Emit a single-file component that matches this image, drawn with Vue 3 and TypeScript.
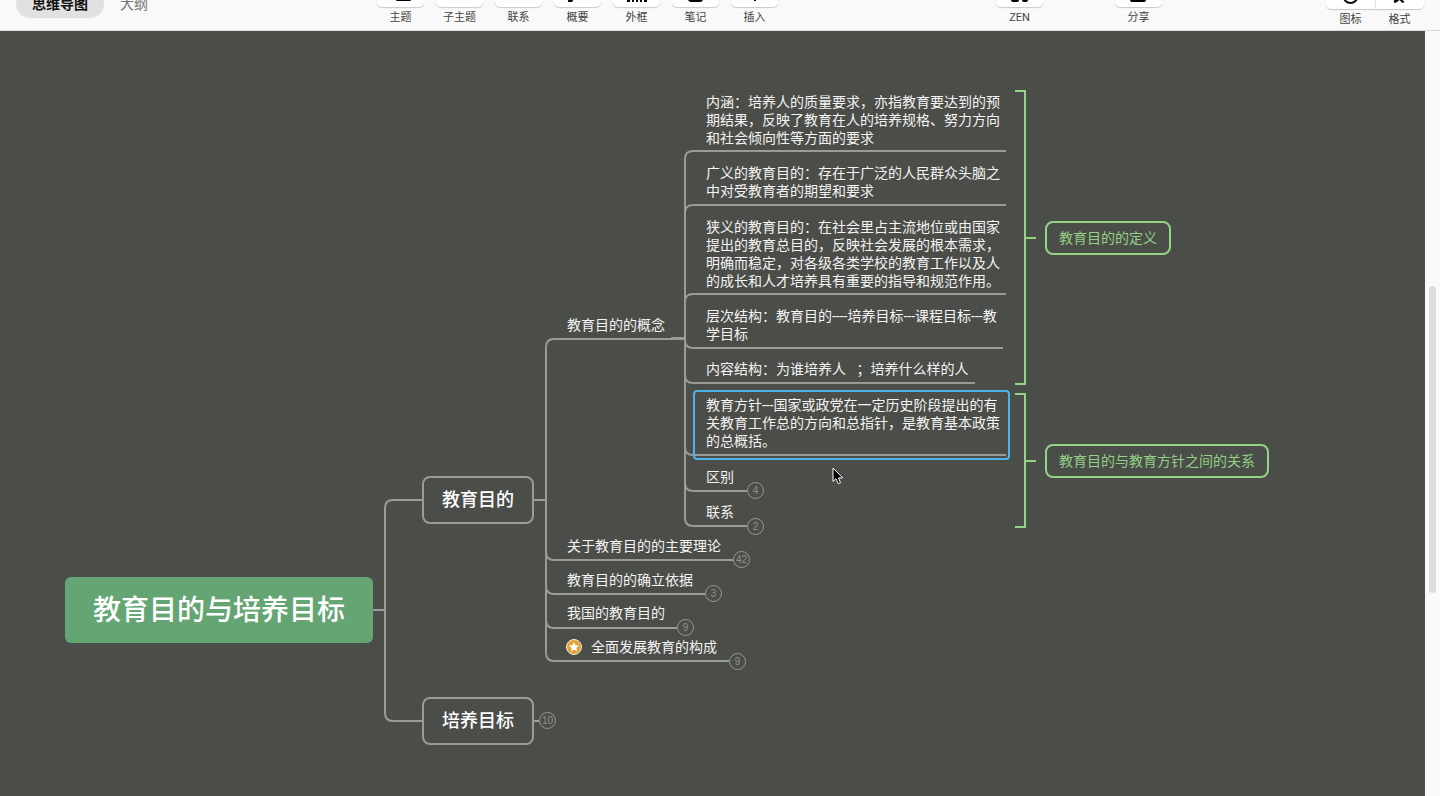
<script setup lang="ts">
interface Tool { label: string; icon: string }
interface Topic { x: number; y: number; text: string; kind: 'root' | 'main' | 'plain' | 'summary' }
interface Fold { x: number; y: number; count: number }

const editTools: Tool[] = [
  { label: '主题', icon: 'topic' },
  { label: '子主题', icon: 'subtopic' },
  { label: '联系', icon: 'relation' },
  { label: '概要', icon: 'summary' },
  { label: '外框', icon: 'boundary' },
  { label: '笔记', icon: 'note' },
  { label: '插入', icon: 'insert' },
]
const shareTools: Tool[] = [
  { label: 'ZEN', icon: 'zen' },
  { label: '分享', icon: 'share' },
]
const panelTools: Tool[] = [
  { label: '图标', icon: 'smile' },
  { label: '格式', icon: 'format' },
]

const topics: Topic[] = [
  { kind: 'root', x: 65, y: 546, text: '教育目的与培养目标' },
  { kind: 'main', x: 422, y: 445, text: '教育目的' },
  { kind: 'main', x: 422, y: 666, text: '培养目标' },
  { kind: 'plain', x: 567, y: 285, text: '教育目的的概念' },
  { kind: 'plain', x: 567, y: 506, text: '关于教育目的的主要理论' },
  { kind: 'plain', x: 567, y: 540, text: '教育目的的确立依据' },
  { kind: 'plain', x: 567, y: 573, text: '我国的教育目的' },
  { kind: 'plain', x: 591, y: 607, text: '全面发展教育的构成' },
  { kind: 'plain', x: 706, y: 62, text: '内涵：培养人的质量要求，亦指教育要达到的预\n期结果，反映了教育在人的培养规格、努力方向\n和社会倾向性等方面的要求' },
  { kind: 'plain', x: 706, y: 133, text: '广义的教育目的：存在于广泛的人民群众头脑之\n中对受教育者的期望和要求' },
  { kind: 'plain', x: 706, y: 187, text: '狭义的教育目的：在社会里占主流地位或由国家\n提出的教育总目的，反映社会发展的根本需求，\n明确而稳定，对各级各类学校的教育工作以及人\n的成长和人才培养具有重要的指导和规范作用。' },
  { kind: 'plain', x: 706, y: 276, text: '层次结构：教育目的----培养目标---课程目标---教\n学目标' },
  { kind: 'plain', x: 706, y: 329, text: '内容结构：为谁培养人   ；培养什么样的人' },
  { kind: 'plain', x: 706, y: 365, text: '教育方针---国家或政党在一定历史阶段提出的有\n关教育工作总的方向和总指针，是教育基本政策\n的总概括。' },
  { kind: 'plain', x: 706, y: 437, text: '区别' },
  { kind: 'plain', x: 706, y: 472, text: '联系' },
  { kind: 'summary', x: 1045, y: 190, text: '教育目的的定义' },
  { kind: 'summary', x: 1045, y: 413, text: '教育目的与教育方针之间的关系' },
]

const folds: Fold[] = [
  { x: 747, y: 451, count: 4 },
  { x: 747, y: 487, count: 2 },
  { x: 733, y: 520, count: 42 },
  { x: 705, y: 554, count: 3 },
  { x: 677, y: 588, count: 9 },
  { x: 729, y: 622, count: 9 },
  { x: 539, y: 681, count: 10 },
]

const place = (p: { x: number; y: number }) => ({ left: `${p.x}px`, top: `${p.y}px` })

/* Elbow from a trunk at (x, from) to a horizontal line at y ending at x2 */
const elbow = (x: number, from: number, y: number, x2: number) => {
  const r = y < from ? 8 : -8
  return `M${x} ${from}V${y + r}Q${x} ${y} ${x + 8} ${y}H${x2}`
}

const branches: string[] = [
  'M372 579H385',
  elbow(385, 579, 469, 422),
  elbow(385, 579, 690, 422),
  'M534 469H546',
  'M534 690H539',
  elbow(546, 469, 308, 685),
  elbow(546, 469, 529, 733),
  elbow(546, 469, 563, 705),
  elbow(546, 469, 597, 677),
  elbow(546, 469, 630, 729),
  'M671 307H685',
  elbow(685, 307, 120, 1006),
  elbow(685, 307, 174, 1006),
  elbow(685, 307, 263, 1006),
  elbow(685, 307, 317, 1003),
  elbow(685, 307, 352, 975),
  elbow(685, 307, 424, 1006),
  elbow(685, 307, 460, 747),
  elbow(685, 307, 495, 747),
]
const brackets: string[] = [
  'M1015 60H1025V353H1015M1025 207H1036',
  'M1015 363H1025V496H1015M1025 430H1036',
]
</script>

<template>
  <div class="app">
    <header class="toolbar">
      <nav class="tabs">
        <button class="tab active">思维导图</button>
        <button class="tab">大纲</button>
      </nav>
      <div class="group edit">
        <button v-for="t in editTools" :key="t.label" class="tool">
          <span class="tile">
            <svg viewBox="0 0 47 24" aria-hidden="true">
              <rect v-if="t.icon === 'topic'" x="19" y="8" width="15" height="10" rx="1" />
              <path v-else-if="t.icon === 'subtopic'" d="M17 5h14v7H17z" />
              <path v-else-if="t.icon === 'relation'" class="line" d="M17 13Q24 4 32 14" />
              <path v-else-if="t.icon === 'summary'" d="M15 5h4v10l1 1-2 3h-4z" />
              <path v-else-if="t.icon === 'boundary'" d="M14 14h3v5h-3zM19 14h2v5h-2zM23 14h2v5h-2zM27 14h2v5h-2zM31 14h3v5h-3z" />
              <rect v-else-if="t.icon === 'note'" x="16" y="4" width="15" height="15" rx="3" />
              <path v-else d="M23 6h2v12h-2zM18 11h12v2H18z" />
            </svg>
          </span>
          <span class="label">{{ t.label }}</span>
        </button>
      </div>
      <div class="group share">
        <button v-for="t in shareTools" :key="t.label" class="tool">
          <span class="tile">
            <svg viewBox="0 0 47 24" aria-hidden="true">
              <path v-if="t.icon === 'zen'" d="M15 6h6v3h5V6h6v11q0 2-2 2h-2q-2 0-2-2v-2h-3v2q0 2-2 2h-4q-2 0-2-2z" />
              <rect v-else x="15" y="7" width="16" height="12" rx="2" />
            </svg>
          </span>
          <span class="label">{{ t.label }}</span>
        </button>
      </div>
      <div class="group panels">
        <button v-for="t in panelTools" :key="t.label" class="tool">
          <span class="tile">
            <svg viewBox="0 0 48 24" aria-hidden="true">
              <g v-if="t.icon === 'smile'" class="ring">
                <circle cx="24" cy="11" r="7" />
                <path d="M20 12Q24 16 28 12" />
              </g>
              <path v-else d="M18 17l4-9h4v6l3 3-2 1-3-3-4 3z" />
            </svg>
          </span>
          <span class="label">{{ t.label }}</span>
        </button>
      </div>
    </header>

    <div class="workspace">
      <main class="canvas">
        <svg class="wires" aria-hidden="true">
          <path v-for="d in branches" :key="d" class="branch" :d="d" />
          <path v-for="d in brackets" :key="d" class="bracket" :d="d" />
        </svg>
        <div v-for="t in topics" :key="t.text" class="topic" :class="t.kind" :style="place(t)">{{ t.text }}</div>
        <button v-for="(f, i) in folds" :key="i" class="fold" :style="place(f)">{{ f.count }}</button>
        <svg class="star" viewBox="0 0 18 18" aria-hidden="true">
          <circle cx="9" cy="9" r="7.5" />
          <path d="M9 4l1.4 3.3 3.6.3-2.7 2.3.8 3.5L9 11.5l-3.1 1.9.8-3.5L4 7.6l3.6-.3z" />
        </svg>
        <div class="selection"></div>
        <svg class="pointer" viewBox="0 0 12 18" aria-hidden="true">
          <path d="M1 1v13.5l3-2.8 2.2 5 2.3-1-2.1-4.8h4.3z" />
        </svg>
      </main>
      <aside class="scrollbar"><div class="thumb"></div></aside>
    </div>
  </div>
</template>

<style>
body {
  margin: 0;
  background: #4b4d49;
}
</style>

<style scoped>
.app {
  display: flex;
  flex-direction: column;
  min-height: 100vh;
  font-family: Roboto, "Noto Sans CJK SC", sans-serif;
}
button {
  padding: 0;
  border: 0;
  background: none;
  font: inherit;
  color: inherit;
}
.toolbar {
  box-sizing: border-box;
  height: 31px;
  display: flex;
  align-items: flex-end;
  overflow: hidden;
  padding: 0 16px;
  background: #f9f9f9;
  border-bottom: 1px solid #dcdcdc;
}
.tabs {
  display: flex;
  width: 355px;
  padding-bottom: 12px;
}
.tab {
  height: 28px;
  padding: 0 16px;
  border-radius: 14px;
  font-size: 14px;
  line-height: 28px;
  color: #777;
}
.tab.active {
  background: #e1e1e1;
  color: #111;
  font-weight: 700;
}
.group {
  display: flex;
  flex-shrink: 0;
}
.edit {
  gap: 12px;
  padding: 0 6px 5px;
}
.share {
  gap: 72px;
  margin-left: 212px;
  padding-bottom: 5px;
}
.panels {
  margin-left: auto;
  padding-bottom: 3px;
}
.tool {
  display: flex;
  flex-direction: column;
  align-items: center;
  gap: 4px;
  width: 47px;
}
.panels .tool {
  width: 49px;
}
.tile {
  display: block;
  width: 100%;
  height: 24px;
  border-radius: 5px;
  background: #fff;
  box-shadow: 0 1px 1px #c8c8c8;
}
.panels .tool:first-child .tile {
  border-radius: 5px 0 0 5px;
}
.panels .tool:last-child .tile {
  border-radius: 0 5px 5px 0;
  box-shadow: 0 1px 1px #c8c8c8, inset 1px 0 #e4e4e4;
}
.tile svg {
  display: block;
  width: 100%;
  height: 24px;
  fill: #000;
}
.tile .line,
.tile .ring {
  fill: none;
  stroke: #111;
  stroke-width: 2;
}
.label {
  font-size: 11px;
  line-height: 14px;
  color: #444;
}
.workspace {
  flex: 1;
  display: flex;
}
.canvas {
  position: relative;
  flex: 1;
  min-height: 765px;
  overflow: hidden;
  background: #4b4d49;
}
.wires {
  position: absolute;
  width: 100%;
  height: 100%;
  fill: none;
  stroke-width: 2;
}
.branch {
  stroke: #999b98;
}
.bracket {
  stroke: #95d387;
}
.topic {
  position: absolute;
  white-space: pre;
  font-size: 14px;
  line-height: 18px;
  color: #f4f4f3;
}
.topic.root {
  padding: 14px 28px 12px;
  border-radius: 6px;
  background: #65a574;
  color: #fff;
  font-size: 28px;
  line-height: 40px;
  font-weight: 500;
}
.topic.main {
  padding: 10px 18px;
  border: 2px solid #999b98;
  border-radius: 8px;
  color: #fff;
  font-size: 18px;
  line-height: 24px;
  font-weight: 500;
}
.topic.summary {
  padding: 6px 12px;
  border: 2px solid #95d387;
  border-radius: 8px;
  color: #92d083;
}
.fold {
  position: absolute;
  box-sizing: border-box;
  width: 17px;
  height: 17px;
  border: 1px solid #979996;
  border-radius: 50%;
  background: #4b4d49;
  color: #90928f;
  font-family: "Liberation Sans", sans-serif;
  font-size: 10px;
  line-height: 15px;
  text-align: center;
}
.star {
  position: absolute;
  left: 565px;
  top: 607px;
  width: 18px;
  height: 18px;
}
.star circle {
  fill: #e3a33b;
  stroke: #f3eee4;
}
.star path {
  fill: #fff;
}
.selection {
  position: absolute;
  box-sizing: border-box;
  left: 693px;
  top: 359px;
  width: 317px;
  height: 70px;
  border: 2px solid #4db3e6;
  border-radius: 4px;
}
.pointer {
  position: absolute;
  left: 832px;
  top: 436px;
  width: 12px;
  height: 18px;
  stroke: #fff;
  fill: #000;
}
.scrollbar {
  width: 15px;
  display: flex;
  flex-direction: column;
  align-items: center;
  background: #fafafa;
}
.scrollbar::before {
  content: "";
  flex: 255;
}
.scrollbar::after {
  content: "";
  flex: 203;
}
.thumb {
  flex: 307;
  width: 7px;
  border-radius: 4px;
  background: #dcdcdc;
}
</style>
